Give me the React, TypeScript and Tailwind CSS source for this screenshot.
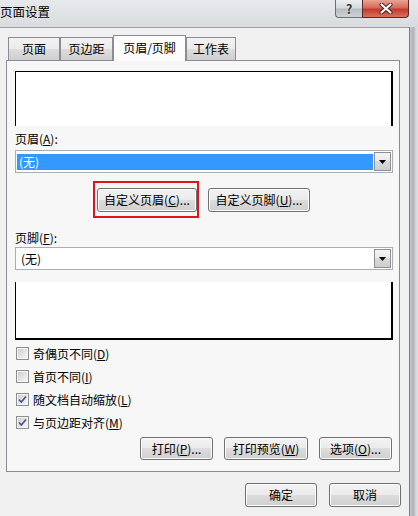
import React from "react";

const btn =
  "flex items-center justify-center h-[23px] border border-[#707070] rounded-[3px] bg-[linear-gradient(to_bottom,#f2f2f2_0%,#ebebeb_50%,#dddddd_50%,#cfcfcf_100%)] shadow-[inset_0_0_0_1px_#fcfcfc] text-[12px] leading-none";

function DropArrow() {
  return (
    <div className="w-[17px] h-full flex items-center justify-center border border-[#8e8f8f] bg-[linear-gradient(to_bottom,#f4f4f4_0%,#e8e8e8_50%,#d9d9d9_50%,#cdcdcd_100%)]">
      <svg width="7" height="4" viewBox="0 0 7 4">
        <path d="M0 0h7L3.5 4z" fill="#000" />
      </svg>
    </div>
  );
}

function Select({ selected }: { selected?: boolean }) {
  return (
    <div className="w-[378px] h-[23px] border border-[#abadb3] bg-white flex items-center p-[1px] gap-[1px]">
      {selected ? (
        <div className="flex-1 h-[16px] bg-[#3399ff] text-white flex items-center pl-[2px]">(无)</div>
      ) : (
        <div className="flex-1 h-[16px] flex items-center pl-[4px]">(无)</div>
      )}
      <DropArrow />
    </div>
  );
}

function Check({ checked, children }: { checked?: boolean; children: React.ReactNode }) {
  return (
    <div className="h-[23px] flex items-center gap-[4px] pl-[1px]">
      <div className="w-[13px] h-[13px] border border-[#8e8f8f] bg-[#f4f4f4] p-[1px]">
        <div className="w-full h-full bg-[linear-gradient(135deg,#cfcfcf,#f6f6f6)] flex items-center justify-center">
          {checked && (
            <svg width="9" height="9" viewBox="0 0 9 9">
              <path d="M1 4.5l2.3 2.5L8 1.5" stroke="#4b549a" strokeWidth="1.7" fill="none" />
            </svg>
          )}
        </div>
      </div>
      <span className="leading-none">{children}</span>
    </div>
  );
}

function Tab({ label, w, active }: { label: string; w: string; active?: boolean }) {
  if (active) {
    return (
      <div
        className={`${w} h-[26px] -mb-px relative z-10 border border-b-0 border-[#898c95] bg-[#fcfcfc] flex items-center justify-center pb-[2px]`}
      >
        {label}
      </div>
    );
  }
  return (
    <div
      className={`${w} h-[23px] border border-b-0 border-[#898c95] bg-[linear-gradient(to_bottom,#f2f2f2_0%,#ebebeb_50%,#dddddd_50%,#cfcfcf_100%)] flex items-center justify-center`}
    >
      {label}
    </div>
  );
}

export default function App() {
  return (
    <div className="w-[418px] h-[516px] overflow-hidden flex flex-col text-[12px] text-black font-['Noto_Sans_CJK_SC','Noto_Sans',sans-serif] bg-[#d8dbde]">
      {/* title bar */}
      <div className="h-[27px] flex items-start bg-[linear-gradient(to_bottom,#e7e9eb,#d9dcdf)]">
        <div className="h-[26px] flex items-center text-[12.5px] pb-[1px]">页面设置</div>
        <div className="ml-auto mr-[9px] flex">
          <div className="w-[27px] h-[18px] border border-t-0 border-r-0 border-[#6b6e72] rounded-bl-[4px] bg-[linear-gradient(to_bottom,#eceef0_0%,#d6d8db_45%,#b9bcc0_55%,#cfd2d5_100%)] flex items-center justify-center text-[13px] font-bold text-[#3a3a3a] [text-shadow:0_0_2px_#fff] leading-none">
            ?
          </div>
          <div className="w-[47px] h-[18px] border border-t-0 border-[#5a2a26] rounded-br-[4px] bg-[linear-gradient(to_bottom,#e8a395_0%,#d7695a_45%,#c43b2c_55%,#d9705d_100%)] flex items-center justify-center">
            <svg width="14" height="11" viewBox="0 0 14 11">
              <path d="M2.5 1.5l9 8M11.5 1.5l-9 8" stroke="#3b2320" strokeWidth="4" strokeLinecap="round" />
              <path d="M2.5 1.5l9 8M11.5 1.5l-9 8" stroke="#ffffff" strokeWidth="2.2" strokeLinecap="round" />
            </svg>
          </div>
        </div>
      </div>

      <div className="flex flex-1">
        {/* client */}
        <div className="w-[409px] bg-[#f0f0f0] border-t border-[#9da0a4] flex flex-col">
          <div className="pt-[7px] pl-[8px] flex items-end">
            <Tab label="页面" w="w-[52px]" />
            <Tab label="页边距" w="w-[53px]" />
            <Tab label="页眉/页脚" w="w-[73px]" active />
            <Tab label="工作表" w="w-[50px]" />
          </div>

          <div className="ml-[6px] w-[394px] border border-[#898c95] bg-[#f7f7f7] pt-[10px] pl-[8px] pr-[6px] pb-[11px] flex flex-col">
            <div className="h-[55px] w-[378px] bg-white border-t border-l border-black border-r-2" />

            <div className="mt-[4px] h-[17px] flex items-center">
              页眉(<u>A</u>):
            </div>
            <div className="mt-[3px]">
              <Select selected />
            </div>

            <div className="mt-[8px] ml-[78px] flex items-start">
              <div className="border-2 border-[#e0141e] pt-[5px] pb-[4px] pl-[2px]">
                <div className={`${btn} w-[100px] h-[24px]`}>
                  自定义页眉(<u>C</u>)...
                </div>
              </div>
              <div className={`${btn} w-[102px] h-[24px] ml-[9px] mt-[7px]`}>
                自定义页脚(<u>U</u>)...
              </div>
            </div>

            <div className="mt-[11px] h-[17px] flex items-center">
              页脚(<u>F</u>):
            </div>
            <div className="mt-[1px]">
              <Select />
            </div>

            <div className="mt-[12px] h-[58px] w-[378px] bg-white border-l border-black border-r-2 border-b-2" />

            <div className="mt-[2px] flex flex-col">
              <Check>
                奇偶页不同(<u>D</u>)
              </Check>
              <Check>
                首页不同(<u>I</u>)
              </Check>
              <Check checked>
                随文档自动缩放(<u>L</u>)
              </Check>
              <Check checked>
                与页边距对齐(<u>M</u>)
              </Check>
            </div>

            <div className="mt-[3px] mr-[1px] flex justify-end gap-[11px]">
              <div className={`${btn} w-[73px]`}>
                打印(<u>P</u>)...
              </div>
              <div className={`${btn} w-[84px]`}>
                打印预览(<u>W</u>)
              </div>
              <div className={`${btn} w-[73px]`}>
                选项(<u>O</u>)...
              </div>
            </div>
          </div>

          <div className="mt-[11px] pr-[8px] flex justify-end gap-[12px]">
            <div className={`${btn} w-[72px] h-[24px] border-[#3c7fb1] shadow-[inset_0_0_0_1px_#a9dcf5]`}>确定</div>
            <div className={`${btn} w-[72px] h-[24px]`}>取消</div>
          </div>
        </div>

        {/* right window frame */}
        <div className="w-[9px] border-l border-[#7d8084] bg-[linear-gradient(to_right,#c4c8cc,#aeb2b6_40%,#d0d3d6_70%,#e2e4e6)]" />
      </div>
    </div>
  );
}
